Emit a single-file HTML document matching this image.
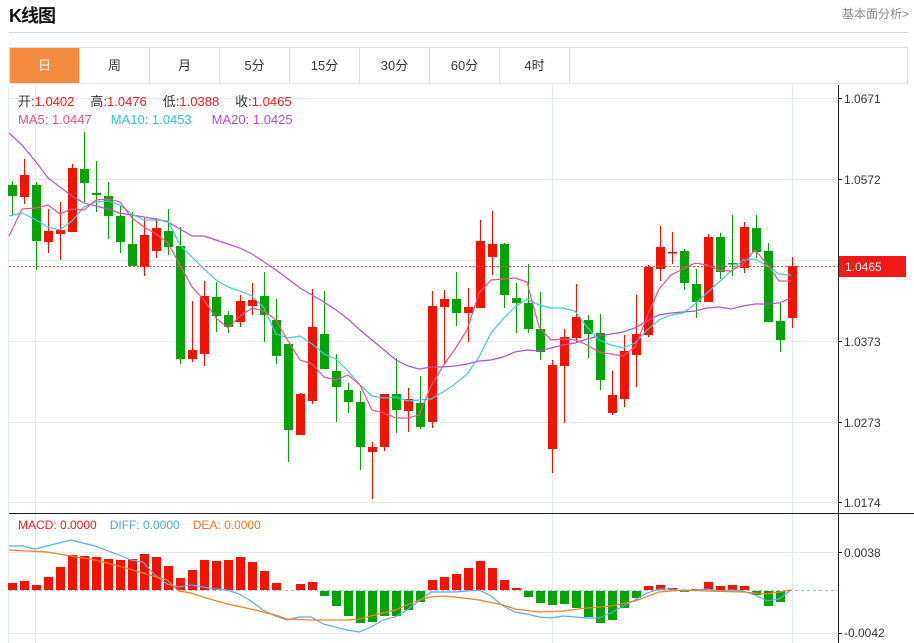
<!DOCTYPE html>
<html><head><meta charset="utf-8">
<style>
html,body{margin:0;padding:0;background:#fff;width:914px;height:643px;overflow:hidden;font-family:"Liberation Sans","Noto Sans CJK SC",sans-serif;}
.t{position:absolute;left:9px;top:2px;font-size:18px;font-weight:bold;color:#111;letter-spacing:-1px}
.more{position:absolute;right:5px;top:5px;font-size:12px;color:#888}
.hl{position:absolute;left:9px;top:32px;width:899px;height:1px;background:#d6d6d6}
.tabs{position:absolute;left:9px;top:47px;width:899px;height:37px;border:1px solid #dcdcdc;border-bottom:1px solid #e6e6e6;box-sizing:border-box;display:flex}
.tabs div{width:70px;height:100%;border-right:1px solid #dcdcdc;box-sizing:border-box;text-align:center;line-height:36px;font-size:13px;color:#333}
.tabs div.on{background:#f28b3e;color:#fff}
svg{position:absolute;left:0;top:0}
</style></head><body>
<div class="t">K线图</div>
<div class="more">基本面分析&gt;</div>
<div class="hl"></div>
<div class="tabs"><div class="on">日</div><div>周</div><div>月</div><div>5分</div><div>15分</div><div>30分</div><div>60分</div><div>4时</div></div>
<svg id="s" width="914" height="643" xmlns="http://www.w3.org/2000/svg" font-family="Liberation Sans, Noto Sans CJK SC, sans-serif">
<g stroke="#e3eaf0" stroke-width="1">
<line x1="9" y1="98.5" x2="838" y2="98.5"/><line x1="9" y1="179.5" x2="838" y2="179.5"/><line x1="9" y1="260.5" x2="838" y2="260.5"/><line x1="9" y1="341.5" x2="838" y2="341.5"/><line x1="9" y1="422.5" x2="838" y2="422.5"/><line x1="9" y1="502.5" x2="838" y2="502.5"/>
<line x1="9" y1="552.5" x2="838" y2="552.5"/><line x1="9" y1="633.5" x2="838" y2="633.5"/>
<line x1="35.5" y1="85" x2="35.5" y2="643"/><line x1="552.5" y1="85" x2="552.5" y2="643"/><line x1="792.5" y1="85" x2="792.5" y2="643"/>
<line x1="8.5" y1="85" x2="8.5" y2="643"/>
</g>
<g id="c"></g>
<line x1="9" y1="266.5" x2="838" y2="266.5" stroke="#f05050" stroke-dasharray="2,2" stroke-width="1"/>
<line x1="9" y1="590.5" x2="838" y2="590.5" stroke="#7fd0e8" stroke-dasharray="3,3" stroke-width="1"/>
<g id="l"></g>
<line x1="838.5" y1="85" x2="838.5" y2="643" stroke="#222"/>
<line x1="9" y1="513.5" x2="914" y2="513.5" stroke="#222"/>
<g stroke="#222"><line x1="838" y1="98.5" x2="842" y2="98.5"/><line x1="838" y1="179.5" x2="842" y2="179.5"/><line x1="838" y1="341.5" x2="842" y2="341.5"/><line x1="838" y1="422.5" x2="842" y2="422.5"/><line x1="838" y1="502.5" x2="842" y2="502.5"/><line x1="838" y1="552.5" x2="842" y2="552.5"/><line x1="838" y1="633.5" x2="842" y2="633.5"/></g>
<g font-size="12" fill="#333">
<text x="844" y="103">1.0671</text><text x="844" y="184">1.0572</text><text x="844" y="346">1.0373</text><text x="844" y="427">1.0273</text><text x="844" y="507">1.0174</text>
<text x="844" y="557">0.0038</text><text x="844" y="637">-0.0042</text>
</g>
<rect x="839" y="256" width="67" height="21" fill="#f21818"/>
<text x="845" y="271" font-size="12" fill="#fff">1.0465</text>
<g font-size="13">
<text x="18" y="106"><tspan fill="#333">开:</tspan><tspan fill="#f01c1c">1.0402</tspan><tspan fill="#333" dx="16">高:</tspan><tspan fill="#f01c1c">1.0476</tspan><tspan fill="#333" dx="16">低:</tspan><tspan fill="#f01c1c">1.0388</tspan><tspan fill="#333" dx="16">收:</tspan><tspan fill="#f01c1c">1.0465</tspan></text>
<text x="18" y="124"><tspan fill="#f0508a">MA5: 1.0447</tspan><tspan fill="#2ec4dc" dx="19">MA10: 1.0453</tspan><tspan fill="#b54dc6" dx="20">MA20: 1.0425</tspan></text>
</g>
<text x="18" y="529" font-size="12"><tspan fill="#f01c1c">MACD: 0.0000</tspan><tspan fill="#4aa6f0" dx="13">DIFF: 0.0000</tspan><tspan fill="#f07a20" dx="13">DEA: 0.0000</tspan></text>
</svg>
<script>
var K=[[185,196,181,216,0],[175,197,159,204,1],[185,241,182,270,0],[231,242,209,253,1],[230,234,202,260,1],[168,232,164,232,1],[169,183,132,202,0],[193,195,161,212,0],[196,216,182,239,0],[216,242,206,253,0],[244,266,212,266,0],[235,267,218,276,1],[228,251,218,258,1],[231,247,209,255,0],[246,359,227,364,0],[350,359,301,362,1],[296,354,281,366,1],[297,316,282,332,0],[315,327,311,333,0],[301,322,295,327,1],[300,306,283,315,1],[296,315,272,342,0],[320,356,299,364,0],[344,430,344,462,0],[394,435,393,435,1],[327,401,289,404,1],[334,369,291,369,0],[371,387,354,422,0],[390,402,383,413,0],[402,447,391,470,0],[447,452,442,499,1],[394,447,394,451,1],[394,410,358,433,0],[399,411,388,432,1],[403,427,376,429,0],[306,422,291,428,1],[299,307,290,364,1],[299,313,272,326,0],[307,313,288,342,1],[241,308,220,308,1],[244,257,211,275,1],[244,295,243,308,0],[298,303,283,333,0],[303,329,264,333,0],[329,352,292,360,0],[365,449,360,473,1],[337,366,329,423,1],[317,338,284,343,1],[320,334,315,358,0],[333,380,314,390,0],[395,413,371,415,1],[351,399,335,407,1],[334,355,295,387,1],[267,335,265,337,1],[247,269,226,281,1],[252,253,232,264,1],[251,283,249,290,0],[284,302,269,318,0],[237,302,234,302,1],[237,272,233,279,0],[263,264,215,276,0],[227,268,222,273,1],[228,252,215,258,0],[251,322,243,322,0],[321,340,303,352,0],[266,318,257,328,1]];
var M=[583,581,585,577,567,555,556,557,559,560,559,554,557,566,578,570,560,561,560,557,562,571,583,590,584,582,596,606,616,623,622,616,616,610,602,580,577,574,568,561,568,580,588,597,603,605,604,608,617,623,620,608,598,586,585,588,592,589,582,586,585,586,595,606,602];
var c=document.getElementById('c'),h='';
for(var i=0;i<K.length;i++){var x=12+i*12,k=K[i],col=k[4]?'#f21300':'#04a307';
h+='<line x1="'+(x+.5)+'" y1="'+k[2]+'" x2="'+(x+.5)+'" y2="'+k[3]+'" stroke="'+col+'"/>';
var bh=Math.max(1.5,k[1]-k[0]);h+='<rect x="'+(x-4)+'" y="'+k[0]+'" width="9" height="'+bh+'" fill="'+col+'"/>';
var m=M[i];if(m<590)h+='<rect x="'+(x-4)+'" y="'+m+'" width="9" height="'+(590-m)+'" fill="#f21300"/>';else if(m>590)h+='<rect x="'+(x-4)+'" y="591" width="9" height="'+(m-591)+'" fill="#04a307"/>';}
c.innerHTML=h;
function pl(p,col){return '<polyline fill="none" stroke="'+col+'" stroke-width="1.2" points="'+p+'"/>';}
var ma5="9,236 22,209 36,208 48,205 60,214 72,209 84,210 96,200 108,199 120,202 132,218 144,227 156,234 168,243 180,265 192,287 204,300 216,318 228,328 240,316 252,308 264,311 276,320 288,341 300,360 312,364 324,377 336,380 348,375 360,385 372,410 384,413 396,418 408,418 419,415 431,386 443,366 455,349 467,330 479,293 491,280 503,279 515,278 527,282 539,327 551,340 563,339 575,340 587,345 599,352 611,354 623,356 635,347 647,317 659,289 671,275 683,269 695,263 707,265 719,270 731,271 743,264 755,250 767,264 779,281 791,281";
var ma10="9,216 22,213 36,220 48,227 60,230 72,221 84,207 96,202 108,201 120,205 132,214 144,220 156,220 168,221 180,245 192,257 204,269 216,280 228,287 240,291 252,296 264,308 276,334 288,338 300,336 312,344 324,354 336,359 348,371 360,385 372,396 384,398 396,397 408,401 419,400 431,399 443,392 455,384 467,374 479,357 491,333 503,319 515,307 527,299 539,305 551,308 563,308 575,311 587,327 599,340 611,345 623,348 635,343 647,330 659,320 671,315 683,313 695,304 707,293 719,282 731,271 743,260 755,259 767,266 779,274 791,275";
var ma20="9,133 22,145 36,162 48,178 60,187 72,196 84,203 96,206 108,209 120,213 132,215 144,217 156,219 168,222 180,229 192,236 204,236 216,240 228,244 240,248 252,254 264,262 276,270 288,279 300,288 312,295 324,302 336,310 348,319 360,330 372,340 384,350 396,360 408,366 419,369 431,367 443,367 455,366 467,364 479,361 491,360 503,357 515,352 527,350 539,351 551,348 563,345 575,343 587,339 599,336 611,334 623,332 635,328 647,321 659,315 671,313 683,312 695,311 707,308 719,307 731,309 743,306 755,304 767,304 779,303 791,298";
var diff="9,546 23,546 35,549 71,540 95,546 119,555 131,560 143,562 155,575 167,584 179,587 191,585 203,587 215,589 227,590 239,594 251,601 263,610 275,616 287,620 299,617 311,617 323,624 347,630 359,632 371,627 383,620 395,617 407,610 419,601 431,592 443,592 455,592 467,591 479,590 491,596 503,606 515,612 527,614 539,617 551,618 563,616 575,617 587,618 599,618 611,613 623,606 635,600 647,593 659,589 671,589 683,591 695,590 707,589 719,591 731,590 743,591 755,595 767,601 779,599 791,590";
var dea="9,550 47,552 71,556 95,560 119,566 143,573 167,580 179,591 191,593 203,597 227,604 251,609 275,615 287,619 311,620 335,620 347,620 359,619 371,616 383,613 395,610 419,600 431,597 443,596 455,597 479,600 503,605 515,609 539,612 563,611 587,608 611,606 635,601 659,592 683,590 707,591 743,592 767,594 791,590";
document.getElementById('l').innerHTML=pl(ma20,'#b550c8')+pl(ma10,'#3ccbe0')+pl(ma5,'#f0508a')+pl(diff,'#5aaaf0')+pl(dea,'#f47d20');
</script>
</body></html>
